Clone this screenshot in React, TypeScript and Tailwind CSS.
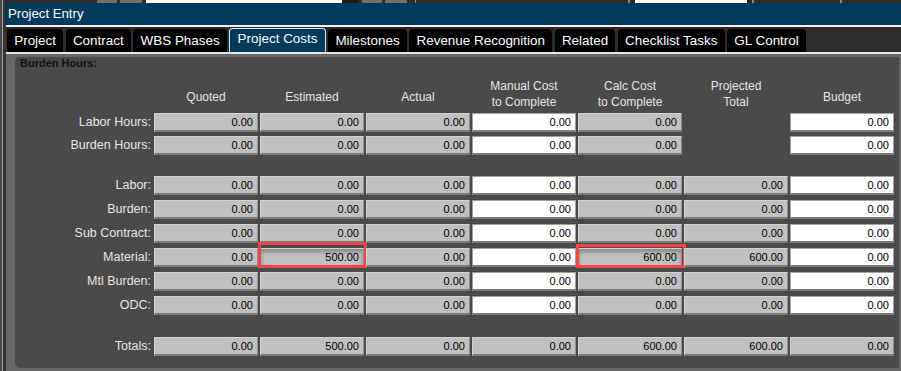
import React from 'react';

type Cell = { v: string; white?: boolean; mark?: 'est' | 'calc' } | null;

type RowData = { label: string; cells: Cell[]; mt: string };

const g = (v = '0.00'): Cell => ({ v });
const w = (v = '0.00'): Cell => ({ v, white: true });

const tabs = [
  'Project',
  'Contract',
  'WBS Phases',
  'Project Costs',
  'Milestones',
  'Revenue Recognition',
  'Related',
  'Checklist Tasks',
  'GL Control',
];

const rows: RowData[] = [
  { label: 'Labor Hours:', mt: 'mt-[2px]', cells: [g(), g(), g(), w(), g(), null, w()] },
  { label: 'Burden Hours:', mt: 'mt-[4px]', cells: [g(), g(), g(), w(), g(), null, w()] },
  { label: 'Labor:', mt: 'mt-[21px]', cells: [g(), g(), g(), w(), g(), g(), w()] },
  { label: 'Burden:', mt: 'mt-[5px]', cells: [g(), g(), g(), w(), g(), g(), w()] },
  { label: 'Sub Contract:', mt: 'mt-[5px]', cells: [g(), g(), g(), w(), g(), g(), w()] },
  {
    label: 'Material:',
    mt: 'mt-[5px]',
    cells: [g(), { v: '500.00', mark: 'est' }, g(), w(), { v: '600.00', mark: 'calc' }, g('600.00'), w()],
  },
  { label: 'Mtl Burden:', mt: 'mt-[5px]', cells: [g(), g(), g(), w(), g(), g(), w()] },
  { label: 'ODC:', mt: 'mt-[5px]', cells: [g(), g(), g(), w(), g(), g(), w()] },
  {
    label: 'Totals:',
    mt: 'mt-[22px]',
    cells: [g(), g('500.00'), g(), g(), g('600.00'), g('600.00'), g()],
  },
];

function Field({ cell }: { cell: Cell }) {
  if (!cell) return <div />;
  return (
    <div
      className={
        'relative h-[19px] border border-b-2 pr-[4px] text-right text-[11px] leading-[16px] text-black ' +
        (cell.white
          ? 'bg-white border-[#a2a2a2] border-b-[#7c7c7c]'
          : 'bg-[#c0c0c0] border-[#d2d2d2] border-r-[#8e8e8e] border-b-[#7a7a7a]') +
        (cell.mark ? ' shadow-[inset_0_3px_4px_rgba(0,0,0,0.3)]' : '')
      }
    >
      {cell.v}
      {cell.mark === 'est' && (
        <div className="absolute -top-[7px] -bottom-[3px] -left-[3px] -right-[4px] border-[3px] border-[#ee4545]" />
      )}
      {cell.mark === 'calc' && (
        <div className="absolute -top-[5px] -bottom-[3px] -left-[3px] -right-[5px] border-[3px] border-[#ee4545]" />
      )}
    </div>
  );
}

function Header({ lines }: { lines: string[] }) {
  return (
    <div className={'text-center text-[12px] leading-[16px] text-[#e4e4e4] ' + (lines.length === 1 ? 'pt-[11px]' : 'pt-[0px]')}>
      {lines.map((l) => (
        <div key={l}>{l}</div>
      ))}
    </div>
  );
}

export default function App() {
  return (
    <div
      className="flex h-[371px] w-[901px] overflow-hidden bg-[#2c2c2c]"
      style={{ fontFamily: '"Liberation Sans", Arial, sans-serif' }}
    >
      {/* left window edge */}
      <div className="flex w-[6px] shrink-0">
        <div className="w-[2px] bg-[#4a4a4a]" />
        <div className="w-[1px] bg-[#a4a4a4]" />
        <div className="w-[3px] bg-[#333]" />
      </div>

      <div className="flex min-w-0 flex-1 flex-col">
        {/* toolbar remnants */}
        <div className="flex h-[3px] shrink-0">
          <div className="ml-[91px] w-[20px] bg-[#6f6f6f]" />
          <div className="ml-[3px] w-[22px] bg-[#6f6f6f]" />
          <div className="ml-[4px] w-[196px] bg-white" />
          <div className="w-[16px] bg-[#1c1c1c]" />
          <div className="ml-[4px] w-[20px] bg-[#6f6f6f]" />
          <div className="ml-[3px] w-[22px] bg-[#6f6f6f]" />
          <div className="ml-[8px] w-[1px] bg-[#9a9a9a]" />
          <div className="ml-[212px] w-[2px] bg-[#8a8a8a]" />
          <div className="ml-[5px] w-[112px] bg-white" />
          <div className="ml-[5px] w-[2px] bg-[#8a8a8a]" />
          <div className="ml-[86px] w-[2px] bg-[#8a8a8a]" />
        </div>

        {/* title bar */}
        <div className="flex h-[22px] shrink-0 items-center bg-[#023a5c] pl-[2px] text-[13.2px] text-white">
          Project Entry
        </div>
        <div className="h-[2px] shrink-0 bg-[#f0f0f0]" />

        {/* tabs */}
        <div className="flex h-[25px] shrink-0 items-end pl-[1px]">
          {tabs.map((t) => {
            const active = t === 'Project Costs';
            return (
              <div
                key={t}
                className={
                  'mr-[2.5px] flex items-center rounded-t-[4px] px-[7.2px] text-[13.45px] text-white ' +
                  (active
                    ? 'h-[24px] border border-b-0 border-[#dde6ec] bg-[#023a5c] pb-[2px]'
                    : 'h-[23px] bg-black pt-[1px]')
                }
              >
                {t}
              </div>
            );
          })}
        </div>
        <div className="h-[2px] shrink-0 bg-[#e8e8e8]" />

        {/* content */}
        <div className="flex min-h-0 flex-1 flex-col bg-[#666] pl-[9px] pr-[2px] pt-[3px] pb-[3px]">
          <div className="flex flex-1 flex-col rounded-l-[5px] bg-[#4a4a4a]">
            <div className="pl-[5px] text-[11px] font-bold leading-[13px] text-[#111]">Burden Hours:</div>

            <div className="mt-[8px] grid h-[33px] grid-cols-[137px_repeat(7,104px)] gap-x-[2px]">
              <div />
              <Header lines={['Quoted']} />
              <Header lines={['Estimated']} />
              <Header lines={['Actual']} />
              <Header lines={['Manual Cost', 'to Complete']} />
              <Header lines={['Calc Cost', 'to Complete']} />
              <Header lines={['Projected', 'Total']} />
              <Header lines={['Budget']} />
            </div>

            {rows.map((r) => (
              <div key={r.label} className={'grid grid-cols-[137px_repeat(7,104px)] gap-x-[2px] ' + r.mt}>
                <div className="pr-[1px] text-right text-[12.5px] leading-[19px] text-[#e6e6e6]">{r.label}</div>
                {r.cells.map((c, i) => (
                  <Field key={i} cell={c} />
                ))}
              </div>
            ))}
          </div>
        </div>
      </div>
    </div>
  );
}
